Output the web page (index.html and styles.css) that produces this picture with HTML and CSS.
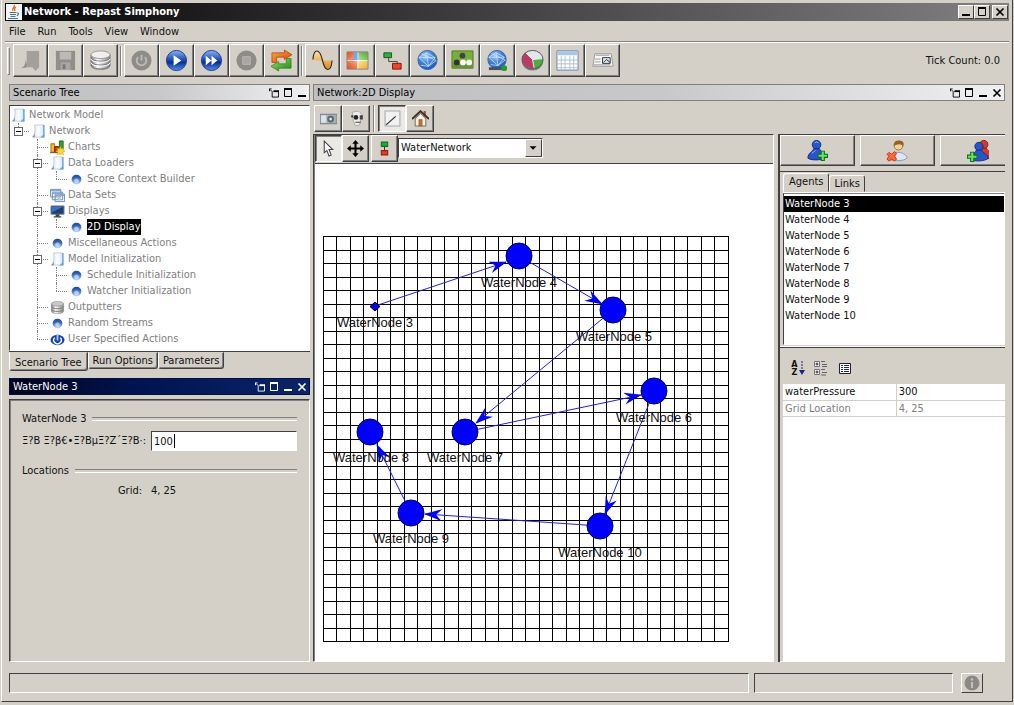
FILE: index.html
```html
<!DOCTYPE html>
<html lang="en">
<head>
<meta charset="utf-8">
<title>Network - Repast Simphony</title>
<link rel="stylesheet" href="styles.css">
</head>
<body>
<svg class="defs" aria-hidden="true">
  <defs>
    <linearGradient id="blue" x1="0" y1="0" x2="0" y2="1"><stop offset="0" stop-color="#8fb4f0"/><stop offset=".45" stop-color="#1f4fb8"/><stop offset=".6" stop-color="#0a2f96"/><stop offset="1" stop-color="#4f95ee"/></linearGradient>
    <radialGradient id="globe" cx=".4" cy=".3" r=".8"><stop offset="0" stop-color="#a8d0f8"/><stop offset=".5" stop-color="#3f7fd0"/><stop offset="1" stop-color="#1a4fa8"/></radialGradient>
    <linearGradient id="disk" x1="0" y1="0" x2="1" y2="0"><stop offset="0" stop-color="#7c7c7c"/><stop offset=".35" stop-color="#fafafa"/><stop offset="1" stop-color="#858585"/></linearGradient>
    <linearGradient id="page" x1="0" y1="0" x2="1" y2="0"><stop offset="0" stop-color="#d5e5f2"/><stop offset=".5" stop-color="#fbfdff"/><stop offset="1" stop-color="#d4e8f8"/></linearGradient>
    <linearGradient id="bead" x1="0" y1="0" x2="0" y2="1"><stop offset="0" stop-color="#1d4690"/><stop offset=".45" stop-color="#3f70bd"/><stop offset="1" stop-color="#c4e0ff"/></linearGradient>
    <linearGradient id="sine" x1="0" y1="0" x2="0" y2="1"><stop offset="0" stop-color="#ffe0a8"/><stop offset="1" stop-color="#e08a18"/></linearGradient>
    <linearGradient id="orange" x1="0" y1="0" x2="1" y2="1"><stop offset="0" stop-color="#ffb030"/><stop offset="1" stop-color="#e03808"/></linearGradient>
    <linearGradient id="green" x1="0" y1="0" x2="1" y2="1"><stop offset="0" stop-color="#a4e060"/><stop offset="1" stop-color="#0f8a18"/></linearGradient>
    <linearGradient id="tile-red" x1="0" y1="0" x2="1" y2="1"><stop offset="0" stop-color="#e84818"/><stop offset="1" stop-color="#f8b090"/></linearGradient>
    <linearGradient id="tile-green" x1="1" y1="0" x2="0" y2="1"><stop offset="0" stop-color="#4ca82c"/><stop offset="1" stop-color="#b8e49c"/></linearGradient>
    <linearGradient id="tile-blue" x1="0" y1="1" x2="1" y2="0"><stop offset="0" stop-color="#e04818"/><stop offset=".5" stop-color="#f07848"/><stop offset="1" stop-color="#f4b8a0"/></linearGradient>
    <linearGradient id="tile-gold" x1="1" y1="1" x2="0" y2="0"><stop offset="0" stop-color="#f0b020"/><stop offset="1" stop-color="#fbe6a0"/></linearGradient>
    <pattern id="cells" patternUnits="userSpaceOnUse" x="323" y="236" width="27" height="27"><path d="M0 0h1v27H0zM13 0h1v27h-1zM0 0h27v1H0zM0 14h27v1H0z"/></pattern>
    <marker id="arrow" viewBox="0 0 18 12" refX="17" refY="6" markerWidth="18" markerHeight="12" markerUnits="userSpaceOnUse" orient="auto"><path d="M0 0L18 6 0 12 6 6z" fill="#00f"/></marker>
  </defs>
  <symbol id="i-page" viewBox="0 0 16 16"><path d="M4 1h9l1 13H2q3-3 2-13z" fill="url(#page)" stroke="#a8bccf" stroke-width=".7"/><path d="M13 1h1.500v13.500H10l3-3z" fill="#64a5dc"/><path d="M1 14q3-2 3-5v5z" fill="#7894b0"/></symbol>
  <symbol id="i-bead" viewBox="0 0 16 16"><circle cx="8" cy="8" r="5.200" fill="url(#bead)"/><circle cx="8" cy="9.500" r="2.500" fill="#cde5ff" opacity=".7"/></symbol>
  <symbol id="i-chart" viewBox="0 0 16 16"><path d="M1 4h4v9H1z" fill="#f4be20" stroke="#a87000"/><path d="M5 7h4v6H5z" fill="#e02818" stroke="#901000"/><path d="M10 1h4v9h-4z" fill="#38a038" stroke="#186818"/><path d="M0 13.500h10" stroke="#555"/><path d="M11 7l1 2.500 2.500-1-1 2.500 2.500 1-2.500 1 1 2.500-2.500-1-1 2-1-2-2.500 1 1-2.500-2.500-1 2.500-1-1-2.500 2.500 1z" fill="#ffd838" stroke="#e0a000" stroke-width=".6"/></symbol>
  <symbol id="i-sets" viewBox="0 0 16 16"><g fill="#f1f6fb" stroke="#6c8db0"><path d="M.5 1.500h11v8H.5zM2.500 4.500h11v8h-11zM5.500 6.500h10v8h-10z"/></g><path d="M1 2h10v1.500H1zM3 5h10v1.500H3zM6 7h9v1.500H6z" fill="#86aad0"/><circle cx="10" cy="11.500" r="1.800" fill="#b8c8d8"/></symbol>
  <symbol id="i-screen" viewBox="0 0 16 16"><path d="M1 2h14v9H1z" fill="#1c3f74" stroke="#8494a6"/><path d="M2 3h12L2 9z" fill="#3974ba"/><path d="M6 11h4v2h2v1.500H4V13h2z" fill="#3c4654"/></symbol>
  <symbol id="i-db" viewBox="0 0 16 16"><path d="M1.500 4v8c0 3.500 13 3.500 13 0V4z" fill="url(#disk)" stroke="#888" stroke-width=".6"/><path d="M1.500 7c1 3 12 3 13 0M1.500 10c1 3 12 3 13 0" fill="none" stroke="#777"/><ellipse cx="8" cy="4" rx="6.500" ry="2.500" fill="#c8c8c8" stroke="#888" stroke-width=".6"/></symbol>
  <symbol id="i-user-action" viewBox="0 0 16 16"><ellipse cx="8" cy="8.500" rx="7.500" ry="5.500" fill="#1744b4"/><path d="M5 6a4 4 0 1 0 6 0" fill="none" stroke="#fff" stroke-width="1.500"/><path d="M8 2v7" stroke="#9fc4ff" stroke-width="2"/></symbol>
  <symbol id="i-globe" viewBox="0 0 24 24"><ellipse cx="12" cy="20" rx="9" ry="3" fill="#c6d8ec"/><circle cx="12" cy="11.500" r="10" fill="url(#globe)" stroke="#3865a8"/><path d="M3 9l8-5 9 5-7 9-10-9 17 0M11 4l2 14M5 17l8 1 8-6M6 5l15 7" fill="none" stroke="#cae4ff" stroke-width=".8"/></symbol>
  <symbol id="i-person" viewBox="0 0 24 24"><circle cx="11" cy="6" r="4.500"/><path d="M2 20c0-6 5-6 6-10h6c1 4 7 4 7 9-3 3-15 4-19 1z"/></symbol>
  <symbol id="i-plus" viewBox="0 0 10 10"><path d="M3.500.5h3v3h3v3h-3v3h-3v-3h-3v-3h3z" fill="#70df60" stroke="#087510"/></symbol>
  <symbol id="w-pin" viewBox="0 0 11 10"><path d="M3.500 4v5.500h7v-6H5" fill="none" stroke="currentColor"/><path d="M5 2h6v2H5zM0 0h3v1H1v2H0z" fill="currentColor"/><path d="M1 1l3 3" stroke="currentColor"/></symbol>
  <symbol id="w-max" viewBox="0 0 10 10"><path d="M1.500 1.500h7v7h-7z" fill="none" stroke="currentColor"/><path d="M1 0h8v2H1z" fill="currentColor"/></symbol>
  <symbol id="w-min" viewBox="0 0 10 10"><path d="M1 7h8v2H1z" fill="currentColor"/></symbol>
  <symbol id="w-close" viewBox="0 0 10 10"><path d="M1.500 1.500l7 7M8.500 1.500l-7 7" stroke="currentColor" stroke-width="1.700"/></symbol>
</svg>

<div class="window">
  <header class="titlebar">
    <svg class="java" viewBox="0 0 16 16" aria-hidden="true"><path d="M0 0h16v16H0z" fill="#f2f5f8"/><path d="M8 1c2 2-3 3-1 6M10 3c-2 1-2 2-1 4" fill="none" stroke="#e36a18" stroke-width="1.300"/><path d="M3.500 8.500h7M4 10.500h6M4.500 12.500h5M2 14.500h10M11 9q3 0 0 3" fill="none" stroke="#47779f" stroke-width="1.100"/></svg>
    <h1>Network - Repast Simphony</h1>
    <div class="caption-buttons">
      <button aria-label="Minimize"><svg viewBox="0 0 10 10"><use href="#w-min"/></svg></button>
      <button aria-label="Maximize"><svg viewBox="0 0 10 10"><use href="#w-max"/></svg></button>
      <button class="apart" aria-label="Close"><svg viewBox="0 0 10 10"><use href="#w-close"/></svg></button>
    </div>
  </header>
  <nav class="menubar">
    <button>File</button><button>Run</button><button>Tools</button><button>View</button><button>Window</button>
  </nav>

  <div class="toolbar">
    <span class="grip"></span>
    <div class="group">
      <button class="tool" aria-label="Open" disabled><svg viewBox="0 0 24 24"><path d="M8 2h13v17l-4 4-3-4H5c4-2 3-9 3-17z" fill="#a3a09c"/><path d="M2 20c4-1 5-5 5-10l1 9z" fill="#8f8d89"/></svg></button>
      <button class="tool" aria-label="Save" disabled><svg viewBox="0 0 24 24"><path d="M2 2h20v20H2z" fill="#918f8c"/><path d="M6 3h12v8H6z" fill="#bdbab5"/><path d="M7 14h10v8H7z" fill="#a9a7a3"/><path d="M9 16h3v5H9z" fill="#777"/></svg></button>
      <button class="tool" aria-label="Database"><svg viewBox="0 0 24 24"><path d="M2 6v11c0 6 20 6 20 0V6z" fill="url(#disk)" stroke="#777" stroke-width=".7"/><path d="M2 9c1 5 19 5 20 0M2 13c1 5 19 5 20 0M2 17c1 5 19 5 20 0" fill="none" stroke="#777"/><path d="M2 10.200c1 5 19 5 20 0M2 14.200c1 5 19 5 20 0" fill="none" stroke="#fff"/><ellipse cx="12" cy="6" rx="10" ry="4" fill="#efefef" stroke="#888" stroke-width=".8"/></svg></button>
    </div>
    <span class="divider"></span>
    <div class="group">
      <button class="tool" aria-label="Initialize" disabled><svg viewBox="0 0 24 24"><circle cx="12" cy="12" r="10.500" fill="#8e8c89"/><path d="M8.500 8.500a5 5 0 1 0 7 0M12 6v6" fill="none" stroke="#bcb9b4" stroke-width="2"/></svg></button>
      <button class="tool" aria-label="Start"><svg viewBox="0 0 24 24"><circle cx="12" cy="12" r="10.500" fill="url(#blue)" stroke="#1c3c84"/><path d="M9 6.500l8 5.500-8 5.500z" fill="#fff"/></svg></button>
      <button class="tool" aria-label="Step"><svg viewBox="0 0 24 24"><circle cx="12" cy="12" r="10.500" fill="url(#blue)" stroke="#1c3c84"/><path d="M6 7l6 5-6 5zM12 7l6 5-6 5z" fill="#fff"/></svg></button>
      <button class="tool" aria-label="Stop" disabled><svg viewBox="0 0 24 24"><circle cx="12" cy="12" r="10.500" fill="#8e8c89"/><path d="M8 8h8v8H8z" fill="#aaa7a3" stroke="#b9b6b1"/></svg></button>
      <button class="tool" aria-label="Reset"><svg viewBox="0 0 24 24"><path d="M2 14V4h13V1l8 5-8 5V8.500H7V14z" fill="url(#orange)" stroke="#a83810" stroke-width=".7"/><path d="M22 10v10H9v3l-8-5 8-5v2.500h8V10z" fill="url(#green)" stroke="#287818" stroke-width=".7"/></svg></button>
    </div>
    <span class="divider"></span>
    <div class="group">
      <button class="tool" aria-label="Time series"><svg viewBox="0 0 24 24"><path d="M2 11C3-1 10-1 12 12H6zM12 12c2 13 9 10 10 0z" fill="url(#sine)"/><path d="M2 11C3-1 9-1 12 12s9 12 10 0" fill="none" stroke="#33291c" stroke-width="1.200"/></svg></button>
      <button class="tool" aria-label="Grid"><svg viewBox="0 0 24 24"><path d="M1 3h11v9H1z" fill="url(#tile-red)"/><path d="M12 3h11v9H12z" fill="url(#tile-green)"/><path d="M8 3h5v9H8z" fill="#74a8ec"/><path d="M1 12h11v9H1z" fill="url(#tile-blue)"/><path d="M12 12h11v9H12z" fill="url(#tile-gold)"/><path d="M1 12h22M12.500 3v18" stroke="#fff" stroke-width=".8"/><path d="M1 3h22v18H1z" fill="none" stroke="#888"/></svg></button>
      <button class="tool" aria-label="Tree"><svg viewBox="0 0 24 24"><path d="M8 9v4h9v3" fill="none" stroke="#444"/><path d="M3 4h8v5H3z" fill="#30b038" stroke="#0d5c18"/><path d="M12 15h9v6h-9z" fill="#f04428" stroke="#8c1408"/></svg></button>
      <button class="tool" aria-label="Network"><svg viewBox="0 0 24 24"><use href="#i-globe"/></svg></button>
      <button class="tool" aria-label="Agents"><svg viewBox="0 0 24 24"><path d="M1 2h22v18H1z" fill="#79ad3c" stroke="#4f7c23"/><path d="M1 15h22v5H1z" fill="#639730"/><circle cx="12" cy="7" r="3" fill="#444"/><circle cx="6" cy="14" r="3" fill="#333"/><circle cx="12.500" cy="14" r="3" fill="#fff"/><circle cx="19" cy="14" r="3" fill="#fff"/></svg></button>
      <button class="tool" aria-label="Remote network"><svg viewBox="0 0 24 24"><svg x="0" y="0" width="20" height="20"><use href="#i-globe"/></svg><path d="M3 19h14v3H3z" fill="#4c525b"/><circle cx="19" cy="20" r="3" fill="#229c2c"/></svg></button>
      <button class="tool" aria-label="Pie chart"><svg viewBox="0 0 24 24"><ellipse cx="12" cy="13" rx="11" ry="9.500" fill="#777"/><ellipse cx="12" cy="11" rx="11" ry="9.500" fill="#dfe8f1"/><path d="M12 11L5 4C-2 8 0 20 14 20.500z" fill="#c03864"/><path d="M12 11l11-1c0 6-4 10-9 10.500z" fill="#4bae40"/><path d="M5 4l7 7 11-1M12 11l2 10" fill="none" stroke="#eee"/><ellipse cx="12" cy="11" rx="11" ry="9.500" fill="none" stroke="#555"/></svg></button>
      <button class="tool" aria-label="Table"><svg viewBox="0 0 24 24"><path d="M1 2h22v20H1z" fill="#fff" stroke="#6284ac"/><path d="M1.500 2.500h21v4h-21z" fill="#a9c8e8"/><path d="M1 11.500h22M1 15.500h22M1 19.500h22M5.500 7v15M9.500 7v15M14.500 7v15M18.500 7v15" stroke="#b0bfce"/></svg></button>
      <button class="tool" aria-label="Report"><svg viewBox="0 0 24 24"><path d="M4 5h17l2 13H2z" fill="#f7f7f7" stroke="#999"/><path d="M5 6.500h14M4 10.500h6M4 13.500h6M3 16.500h17" stroke="#999"/><path d="M12 9h8v6h-8z" fill="#dce8f2" stroke="#333"/><path d="M13 14l3-3 4 3" stroke="#333" fill="none"/></svg></button>
    </div>
    <output class="ticks">Tick Count: 0.0</output>
  </div>

  <main class="workspace">
    <div class="left">
      <section class="dock">
        <header class="dock-title"><h2>Scenario Tree</h2>
          <div class="dock-tools"><button aria-label="Float"><svg><use href="#w-pin"/></svg></button><button aria-label="Maximize"><svg><use href="#w-max"/></svg></button><button aria-label="Minimize"><svg><use href="#w-min"/></svg></button></div>
        </header>
        <div class="tree">
          <div class="row"><svg><use href="#i-page"/></svg><span>Network Model</span></div>
          <ul>
            <li><button class="toggle" aria-label="Collapse Network"></button><div class="row"><svg><use href="#i-page"/></svg><span>Network</span></div>
              <ul>
                <li><div class="row"><svg><use href="#i-chart"/></svg><span>Charts</span></div></li>
                <li><button class="toggle" aria-label="Collapse Data Loaders"></button><div class="row"><svg><use href="#i-page"/></svg><span>Data Loaders</span></div>
                  <ul><li><div class="row"><svg><use href="#i-bead"/></svg><span>Score Context Builder</span></div></li></ul></li>
                <li><div class="row"><svg><use href="#i-sets"/></svg><span>Data Sets</span></div></li>
                <li><button class="toggle" aria-label="Collapse Displays"></button><div class="row"><svg><use href="#i-screen"/></svg><span>Displays</span></div>
                  <ul><li><div class="row"><svg><use href="#i-bead"/></svg><span class="selected">2D Display</span></div></li></ul></li>
                <li><div class="row"><svg><use href="#i-bead"/></svg><span>Miscellaneous Actions</span></div></li>
                <li><button class="toggle" aria-label="Collapse Model Initialization"></button><div class="row"><svg><use href="#i-page"/></svg><span>Model Initialization</span></div>
                  <ul><li><div class="row"><svg><use href="#i-bead"/></svg><span>Schedule Initialization</span></div></li><li><div class="row"><svg><use href="#i-bead"/></svg><span>Watcher Initialization</span></div></li></ul></li>
                <li><div class="row"><svg><use href="#i-db"/></svg><span>Outputters</span></div></li>
                <li><div class="row"><svg><use href="#i-bead"/></svg><span>Random Streams</span></div></li>
                <li><div class="row"><svg><use href="#i-user-action"/></svg><span>User Specified Actions</span></div></li>
              </ul>
            </li>
          </ul>
        </div>
        <div class="tabs bottom"><button class="active">Scenario Tree</button><button>Run Options</button><button>Parameters</button></div>
      </section>
      <section class="dock grow">
        <header class="dock-title focused"><h2>WaterNode 3</h2>
          <div class="dock-tools"><button aria-label="Float"><svg><use href="#w-pin"/></svg></button><button aria-label="Maximize"><svg><use href="#w-max"/></svg></button><button aria-label="Minimize"><svg><use href="#w-min"/></svg></button><button aria-label="Close"><svg><use href="#w-close"/></svg></button></div>
        </header>
        <div class="probe">
          <h3>WaterNode 3</h3>
          <div class="field"><label for="pressure">Ξ?Β Ξ?β€•Ξ?ΒµΞ?Ζ΄Ξ?Β·:</label><div class="entry"><input id="pressure" type="text" value="100"><i class="caret"></i></div></div>
          <h3>Locations</h3>
          <div class="field"><span class="name">Grid:</span><span>4, 25</span></div>
        </div>
      </section>
    </div>

    <section class="dock display">
      <header class="dock-title"><h2>Network:2D Display</h2>
        <div class="dock-tools"><button aria-label="Float"><svg><use href="#w-pin"/></svg></button><button aria-label="Maximize"><svg><use href="#w-max"/></svg></button><button aria-label="Minimize"><svg><use href="#w-min"/></svg></button><button aria-label="Close"><svg><use href="#w-close"/></svg></button></div>
      </header>
      <div class="viewbar">
        <button class="tool small" aria-label="Snapshot"><svg viewBox="0 0 16 16"><path d="M0 4h16v9H0z" fill="#a5adb5" stroke="#777f87"/><path d="M1 5h5v7H1z" fill="#dce4ea"/><circle cx="10" cy="8.500" r="3.200" fill="#5c6874"/><circle cx="10" cy="8.500" r="1.300" fill="#dbe8f2"/></svg></button>
        <button class="tool small" aria-label="Record movie"><svg viewBox="0 0 16 16"><path d="M4 2l6-1 3 3-2 10-4 1-2-5z" fill="#ededed" stroke="#999" stroke-width=".7"/><circle cx="7.500" cy="7" r="2.200" fill="#222"/><path d="M11 5h3v4h-3zM3 5h2v2H3zM7 11h5v1H7z" fill="#444"/></svg></button>
        <span class="divider"></span>
        <button class="tool small pressed" aria-label="Edit"><svg viewBox="0 0 16 16"><path d="M1 1h14v14H1z" fill="#f2f2f2" stroke="#aaa"/><path d="M2 14L11 6" stroke="#333" stroke-width="1.200"/></svg></button>
        <button class="tool small" aria-label="Home"><svg viewBox="0 0 16 16"><path d="M11 1h2v5h-2z" fill="#a34a28"/><path d="M3 8l5-5 5 5v7H3z" fill="#f8f1df" stroke="#776"/><path d="M0 8.500L8 1l8 7.500" fill="none" stroke="#393028" stroke-width="1.700"/><path d="M6.500 9h3v6h-3z" fill="#c07830" stroke="#75441c" stroke-width=".5"/></svg></button>
      </div>
      <div class="split">
        <div class="stage">
          <div class="editbar">
            <button class="tool small pressed" aria-label="Select"><svg viewBox="0 0 16 16"><path d="M4 1l8 8H8.500l2 5-2 1-2-5L4 12z" fill="#fff" stroke="#444"/></svg></button>
            <button class="tool small" aria-label="Move"><svg viewBox="0 0 16 16"><path d="M8 0l3 3.500H9V7h3.500V5L16 8l-3.500 3V9H9v3.500h2L8 16l-3-3.500h2V9H3.500v2L0 8l3.500-3v2H7V3.500H5z"/></svg></button>
            <button class="tool small edge" aria-label="Add edge"><svg viewBox="0 0 16 16"><path d="M8 6v4" stroke="#333"/><path d="M5 2h6v4H5z" fill="#22a838" stroke="#176e23"/><path d="M5 10h6v4H5z" fill="#ed3a2d" stroke="#9a1b10"/></svg></button>
            <div class="combo"><select aria-label="Network"><option>WaterNetwork</option></select><svg viewBox="0 0 17 18" aria-hidden="true"><path d="M4 7h8l-4 4z"/></svg></div>
          </div>
          <div class="canvas">
            <svg width="457" height="494" viewBox="315 164 457 494" role="img" aria-label="Water network on a grid">
              <rect x="323" y="236" width="406" height="406" fill="url(#cells)"/>
              <g stroke="#2020e8" stroke-width="1">
                <path d="M375 306L506 262" marker-end="url(#arrow)"/>
                <path d="M519 256L602 304" marker-end="url(#arrow)"/>
                <path d="M613 310L476 423" marker-end="url(#arrow)"/>
                <path d="M465 432L641 395" marker-end="url(#arrow)"/>
                <path d="M654 391L605 514" marker-end="url(#arrow)"/>
                <path d="M600 526L425 514" marker-end="url(#arrow)"/>
                <path d="M411 513L377 445" marker-end="url(#arrow)"/>
              </g>
              <g fill="#00f" stroke="#000060">
                <circle cx="519" cy="256" r="13"/><circle cx="613" cy="310" r="13"/><circle cx="654" cy="391" r="13"/><circle cx="465" cy="432" r="13"/><circle cx="370" cy="432" r="13"/><circle cx="411" cy="513" r="13"/><circle cx="600" cy="526" r="13"/>
                <path d="M375 302l5 4.500-5 4.500-5-4.500z" stroke="#000"/>
              </g>
              <g class="labels">
                <text x="375" y="327">WaterNode 3</text><text x="519" y="287">WaterNode 4</text><text x="614" y="341">WaterNode 5</text><text x="654" y="422">WaterNode 6</text><text x="465" y="462">WaterNode 7</text><text x="371" y="462">WaterNode 8</text><text x="411" y="543">WaterNode 9</text><text x="600" y="557">WaterNode 10</text>
              </g>
            </svg>
          </div>
        </div>
        <aside class="editor">
          <div class="agent-actions">
            <button aria-label="Add agent"><svg viewBox="0 0 24 24"><use href="#i-person" fill="#2855c8" stroke="#102c86"/><path d="M9 4q2-2 4 0M6 15l4-3" stroke="#8fb3ff" fill="none"/><use href="#i-plus" x="12" y="12" width="11" height="11"/></svg></button>
            <button aria-label="Remove agent"><svg viewBox="0 0 24 24"><path d="M5 22c0-5 4-7 6-8h4c3 1 7 3 7 6-4 3-10 3-17 2z" fill="#dce8fa" stroke="#8299c0"/><circle cx="13" cy="7" r="4.500" fill="#f6cf9c" stroke="#a37438"/><path d="M8 7q0-6 6-5.500t4 6q-3-4-10-.5z" fill="#916420"/><path d="M3 14l3 2 3-3 2 2-2 3 2 3-2 2-3-2-3 2-2-2 2-3-2-2z" fill="#ff6738" stroke="#c83410"/></svg></button>
            <button aria-label="Add link"><svg viewBox="0 0 24 24"><svg x="8" y="0" width="16" height="20"><use href="#i-person" fill="#d83824" stroke="#8c180c"/></svg><svg x="3" y="2" width="18" height="21"><use href="#i-person" fill="#2855c8" stroke="#102c86"/></svg><use href="#i-plus" x="1" y="13" width="11" height="11"/></svg></button>
          </div>
          <div class="lists">
            <div class="tabs top"><button class="active">Agents</button><button>Links</button></div>
            <ul class="agents"><li class="selected">WaterNode 3</li><li>WaterNode 4</li><li>WaterNode 5</li><li>WaterNode 6</li><li>WaterNode 7</li><li>WaterNode 8</li><li>WaterNode 9</li><li>WaterNode 10</li></ul>
          </div>
          <div class="properties">
            <div class="prop-tools">
              <button class="sort" aria-label="Sort"><span class="az"><b>A</b><b>Z</b></span><svg viewBox="0 0 6 16"><path d="M3 1v10" stroke="#202080" stroke-dasharray="2 1"/><path d="M0 10h6l-3 5z" fill="#202080"/></svg></button>
              <button aria-label="Categories"><svg viewBox="0 0 16 16"><path d="M1.500 1.500h5v5h-5zM1.500 9.500h5v5h-5z" fill="#fff" stroke="#777"/><path d="M4 2.500v3M2.500 4h3M4 10.500v3M2.500 12h3" stroke="#222"/><path d="M8 1.500h4M9 4.500h5M9 6.500h5M8 9.500h4M9 12.500h5M8 15h5" stroke="#666"/></svg></button>
              <button aria-label="Description"><svg viewBox="0 0 16 16"><path d="M2.500 3.500h11v10h-11z" fill="#fff" stroke="#222"/><path d="M4 5.500h2M7 5.500h5M4 7.500h2M7 7.500h5M4 9.500h2M7 9.500h5M4 11.500h2M7 11.500h5" stroke="#2020a0"/></svg></button>
            </div>
            <div class="prop-sheet"><table><tbody><tr><th scope="row">waterPressure</th><td>300</td></tr><tr class="readonly"><th scope="row">Grid Location</th><td>4, 25</td></tr></tbody></table></div>
          </div>
        </aside>
      </div>
    </section>
  </main>

  <footer class="statusbar">
    <div class="status wide"></div><div class="status narrow"></div>
    <button class="info" aria-label="Information"><svg viewBox="0 0 16 16"><circle cx="8" cy="8" r="7.500" fill="#8b8986"/><circle cx="8" cy="4.500" r="1.200" fill="#c4c1bc"/><path d="M8 7v6" stroke="#c4c1bc" stroke-width="2"/></svg></button>
  </footer>
</div>
</body>
</html>
```

FILE: styles.css
```css
* { box-sizing: border-box; }
:root {
  --face: #d4d0c8;
  --shade: #808080;
  --dark: #404040;
}
body {
  margin: 0;
  background: var(--face);
  color: #111;
  font: 11px/16px "DejaVu Sans Condensed", "DejaVu Sans", sans-serif;
}
button, input, select { font: inherit; color: inherit; }
button { margin: 0; padding: 0; border: 0; background: none; }
h1, h2, h3, ul { margin: 0; padding: 0; font: inherit; }
ul { list-style: none; }
svg { display: block; flex: none; }
.defs { position: absolute; width: 0; height: 0; }

.window {
  display: flex;
  flex-direction: column;
  min-height: calc(100vh - 3px);
  margin: 0 1px 3px;
  padding: 3px 3px 8px;
  border: 0 solid var(--dark);
  border-left: 1px solid #fff;
  border-right: 1px solid var(--dark);
  border-bottom: 1px solid var(--dark);
}

.titlebar {
  display: flex;
  align-items: center;
  gap: 2px;
  height: 18px;
  padding: 0 1px;
  background: linear-gradient(to right, #050505, #808080);
  color: #fff;
}
.titlebar h1 { flex: 1; font-weight: bold; }
.java { width: 16px; height: 16px; }
.caption-buttons { display: flex; }
.caption-buttons button {
  display: grid;
  place-items: center;
  width: 16px;
  height: 14px;
  background: var(--face);
  border: 1px solid;
  border-color: #fff var(--dark) var(--dark) #fff;
  color: #000;
}
.caption-buttons .apart { margin-left: 2px; }
.caption-buttons svg { width: 10px; height: 10px; }

.menubar {
  display: flex;
  gap: 12px;
  height: 21px;
  padding: 1px 4px 0;
  border-bottom: 1px solid var(--shade);
  box-shadow: 0 1px #fff;
}

.toolbar {
  display: flex;
  align-items: center;
  height: 37px;
  padding: 0 9px 0 2px;
}
.grip {
  width: 3px;
  height: 28px;
  margin-right: 3px;
  border: 1px solid;
  border-color: #fff var(--shade) var(--shade) #fff;
}
.divider {
  width: 2px;
  height: 30px;
  margin: 0 2px;
  border-left: 1px solid var(--shade);
  border-right: 1px solid #fff;
}
.group { display: flex; }
.tool {
  display: grid;
  place-items: center;
  width: 35px;
  height: 33px;
  border: 1px solid;
  border-color: #fff var(--dark) var(--dark) #fff;
  box-shadow: inset -1px -1px var(--shade);
}
.tool svg { width: 23px; height: 23px; }
.tool.small { width: 28px; height: 27px; }
.tool.small svg { width: 17px; height: 17px; }
.tool.pressed {
  background: #ebe9e4;
  border-color: var(--dark) #fff #fff var(--dark);
  box-shadow: inset 1px 1px var(--shade);
}
.ticks { margin-left: auto; }

.workspace {
  flex: 1;
  display: grid;
  grid-template-columns: 301px 1fr;
  gap: 3px;
  padding: 5px 4px 0 4px;
}
.left { display: flex; flex-direction: column; gap: 7px; }
.dock { display: flex; flex-direction: column; min-width: 0; }
.dock.grow { flex: 1; }
.dock-title {
  display: flex;
  align-items: center;
  justify-content: space-between;
  height: 17px;
  margin-bottom: 4px;
  padding: 0 2px 0 3px;
  background: linear-gradient(to right, #bfbfbf, #c8c8ca 50%, #f0f0f0);
  border: 1px solid var(--shade);
  color: #000;
}
.dock-title.focused {
  background: linear-gradient(to right, #00041c, #001350 40%, #0a246a);
  border-color: #001040;
  color: #fff;
}
.dock-tools { display: flex; gap: 4px; }
.dock-tools svg { width: 10px; height: 10px; }

.tree {
  padding: 1px 1px 3px 1px;
  background: #fff;
  border: 1px solid;
  border-color: var(--dark) #fff #fff var(--dark);
  color: #808080;
}
.tree ul { margin-left: 7px; }
.tree ul ul { margin-left: 6px; }
.tree li { position: relative; padding-left: 13px; }
.tree li::before {
  content: "";
  position: absolute;
  top: 0;
  bottom: 0;
  left: 0;
  border-left: 1px dotted #808080;
}
.tree li:last-child::before { bottom: auto; height: 8px; }
.tree li::after {
  content: "";
  position: absolute;
  top: 8px;
  left: 0;
  width: 11px;
  border-top: 1px dotted #808080;
}
.tree .row { display: flex; align-items: center; gap: 3px; height: 16px; }
.tree .row svg { width: 15px; height: 15px; }
.tree .selected { background: #000; color: #fff; }
.toggle {
  position: absolute;
  z-index: 1;
  top: 4px;
  left: -4px;
  width: 9px;
  height: 9px;
  border: 1px solid #666;
  background: linear-gradient(#000, #000) center / 5px 1px no-repeat #fff;
}

.tabs { display: flex; }
.tabs button {
  height: 17px;
  padding: 0 4px;
  border: 1px solid;
}
.tabs.bottom { align-items: flex-start; height: 20px; border-top: 1px solid var(--dark); }
.tabs.bottom button {
  border-color: transparent var(--dark) var(--dark) #fff;
  border-radius: 0 0 3px 3px;
  box-shadow: inset -1px -1px var(--shade);
}
.tabs.bottom .active { height: 19px; padding: 2px 5px 0; }
.tabs.top { align-items: flex-end; height: 21px; border-bottom: 1px solid #fff; }
.tabs.top button {
  border-color: #fff var(--dark) transparent #fff;
  border-radius: 3px 3px 0 0;
}
.tabs.top .active { height: 19px; padding: 0 5px 2px; }

.probe {
  flex: 1;
  padding: 11px 12px;
  border: 1px solid;
  border-color: var(--dark) #fff #fff var(--dark);
  box-shadow: inset 1px 1px var(--shade);
}
.probe h3 { display: flex; align-items: center; gap: 6px; margin-bottom: 4px; }
.probe h3::after {
  content: "";
  flex: 1;
  height: 2px;
  border-top: 1px solid var(--shade);
  border-bottom: 1px solid #fff;
}
.field { display: flex; align-items: center; gap: 9px; min-height: 16px; margin-bottom: 12px; }
.field label, .field .name { flex: none; width: 120px; text-align: right; white-space: nowrap; }
.entry { position: relative; flex: 1; }
.entry input {
  display: block;
  width: 100%;
  height: 20px;
  padding: 0 2px;
  background: #fff;
  border: 1px solid;
  border-color: var(--dark) #fff #fff var(--dark);
  outline: 0;
}
.caret { position: absolute; top: 3px; left: 23px; width: 1px; height: 14px; background: #000; }

.viewbar { display: flex; height: 29px; padding-left: 1px; }
.viewbar .divider { height: 27px; margin: 0 3px; }
.split { flex: 1; display: grid; grid-template-columns: 1fr 227px; gap: 4px; min-height: 0; }
.stage {
  display: flex;
  flex-direction: column;
  min-width: 0;
  border: 1px solid;
  border-color: var(--dark) #fff #fff var(--dark);
  box-shadow: inset 1px 0 var(--shade);
  padding-left: 1px;
}
.editbar { display: flex; height: 28px; }
.editbar .tool.small { width: 27px; }
.editbar .edge { margin-left: 2px; }
.combo { position: relative; width: 145px; margin: 3px 0; }
.combo select {
  width: 100%;
  height: 20px;
  padding: 0 20px 0 2px;
  appearance: none;
  border: 1px solid;
  border-color: var(--dark) #fff #fff var(--dark);
  border-radius: 0;
  background: #fff;
}
.combo svg {
  position: absolute;
  top: 1px;
  right: 1px;
  width: 17px;
  height: 18px;
  background: var(--face);
  border: 1px solid;
  border-color: #fff var(--dark) var(--dark) #fff;
  pointer-events: none;
}
.canvas { flex: 1; overflow: hidden; background: #fff; border-top: 1px solid var(--dark); }
.labels { font: 13px "Liberation Sans", Arial, sans-serif; text-anchor: middle; fill: #111; }

.editor {
  display: flex;
  flex-direction: column;
  min-width: 0;
  border-left: 2px solid var(--dark);
}
.agent-actions { display: flex; gap: 5px; height: 37px; overflow: hidden; border-top: 1px solid var(--dark); }
.agent-actions button {
  flex: none;
  display: grid;
  place-items: center;
  width: 75px;
  height: 31px;
  border: 1px solid;
  border-color: #fff var(--dark) var(--dark) #fff;
  box-shadow: inset -1px -1px var(--shade);
}
.agent-actions svg { width: 23px; height: 23px; }
.lists { padding-left: 3px; border-top: 1px solid var(--dark); }
.agents {
  height: 152px;
  padding-top: 2px;
  background: #fff;
  border: 1px solid;
  border-color: var(--shade) #fff #fff var(--dark);
}
.agents li { padding-left: 1px; }
.agents .selected { background: #000; color: #fff; }
.properties {
  flex: 1;
  display: flex;
  flex-direction: column;
  margin-top: 2px;
  padding: 4px 0 0 3px;
  border-top: 1px solid var(--dark);
  border-bottom: 1px solid #fff;
  box-shadow: 0 -1px #fff;
}
.prop-tools { display: flex; align-items: center; gap: 8px; height: 32px; padding-left: 7px; }
.prop-tools svg { width: 16px; height: 16px; }
.prop-tools .sort { display: flex; align-items: center; }
.prop-tools .sort svg { width: 6px; }
.az { width: 9px; font-size: 9px; line-height: 8px; }
.az b { display: block; }
.prop-sheet { flex: 1; background: #fff; }
.prop-sheet table { width: 100%; border-collapse: collapse; table-layout: fixed; }
.prop-sheet th, .prop-sheet td {
  height: 16px;
  padding: 0 2px;
  border: 0 solid var(--face);
  border-bottom-width: 1px;
  font-weight: normal;
  line-height: 15px;
  text-align: left;
}
.prop-sheet th { width: 51%; border-right-width: 1px; }
.prop-sheet .readonly { color: #808080; }

.statusbar { display: flex; gap: 5px; padding: 11px 26px 0 4px; }
.status {
  height: 20px;
  border: 1px solid;
  border-color: var(--dark) #fff #fff var(--dark);
}
.status.wide { flex: 15; }
.status.narrow { flex: 4; }
.info {
  display: grid;
  place-items: center;
  width: 22px;
  height: 20px;
  margin-left: 3px;
  border: 1px solid;
  border-color: #fff var(--dark) var(--dark) #fff;
}
.info svg { width: 16px; height: 16px; }
```
